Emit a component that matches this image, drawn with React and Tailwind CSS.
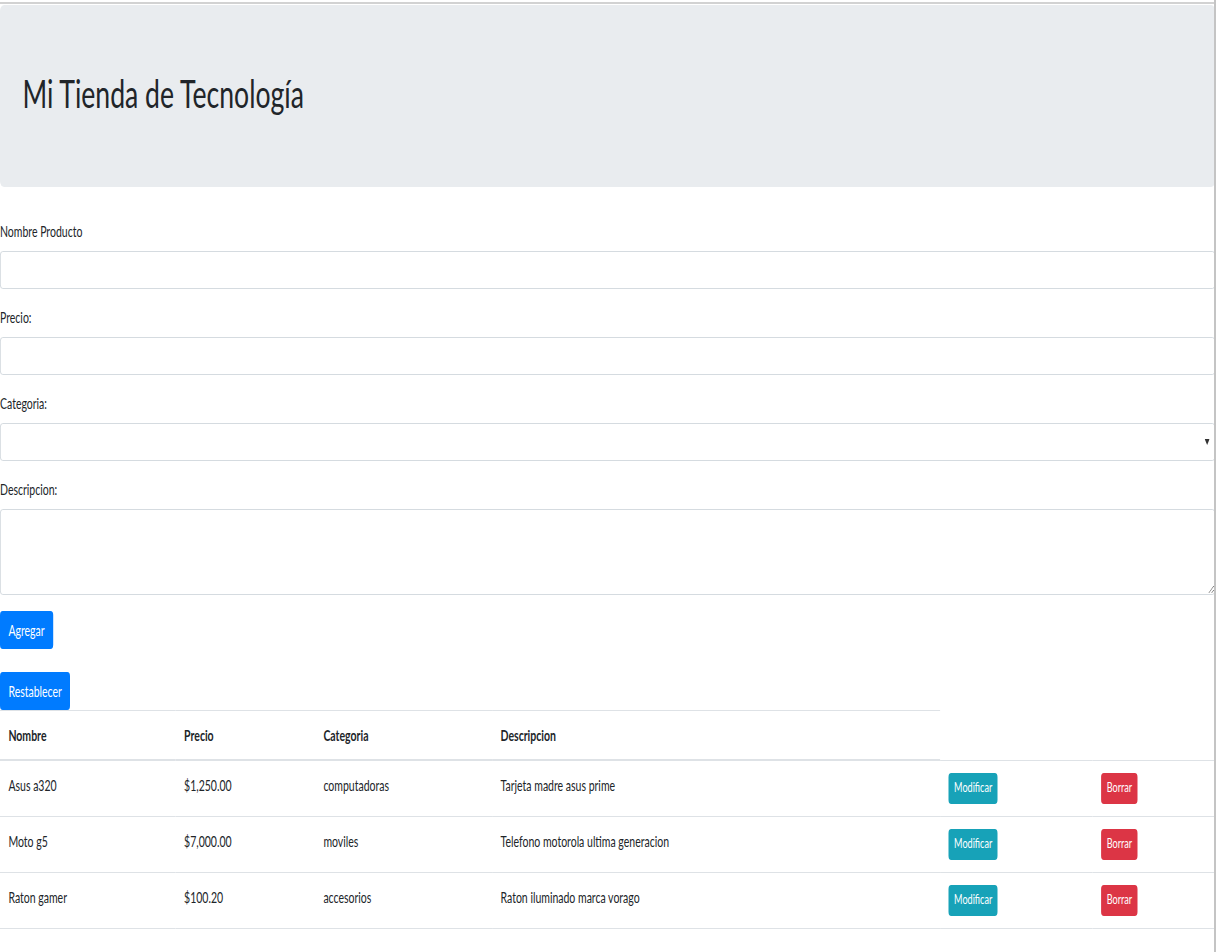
const productos = [
  { nombre: 'Asus a320', precio: '$1,250.00', categoria: 'computadoras', descripcion: 'Tarjeta madre asus prime' },
  { nombre: 'Moto g5', precio: '$7,000.00', categoria: 'moviles', descripcion: 'Telefono motorola ultima generacion' },
  { nombre: 'Raton gamer', precio: '$100.20', categoria: 'accesorios', descripcion: 'Raton iluminado marca vorago' },
]

function Field({ label, children }) {
  return (
    <div className="mb-4">
      <label className="mb-2 block">{label}</label>
      {children}
    </div>
  )
}

const inputClass = 'block h-[38px] w-full rounded border border-[#ced4da] bg-white px-3 outline-none'

// The reference is a wide desktop page captured and squeezed horizontally,
// so the page is laid out at its natural width and narrowed as a whole.
export default function App() {
  return (
    <div className="min-h-screen bg-white">
      <div className="min-h-screen w-[1216px] overflow-hidden border-r-2 border-[#c4c4c4] pt-[2px]">
        <div className="w-[1736px] origin-top-left scale-x-[0.7] border-t-2 border-[#d2d2d2] pt-px font-['Lato',sans-serif] text-[15px] leading-6 text-[#212529]">
          <div className="mb-8 rounded-md bg-[#e9ecef] px-8 py-16">
            <h1 className="mb-[6px] text-[38px] font-normal leading-[48px]">Mi Tienda de Tecnología</h1>
          </div>

          <form>
            <Field label="Nombre Producto">
              <input className={inputClass} type="text" />
            </Field>
            <Field label="Precio:">
              <input className={inputClass} type="text" />
            </Field>
            <Field label="Categoria:">
              <div className={inputClass + ' flex items-center justify-end pr-[7px]'}>
                <svg width="7" height="6" viewBox="0 0 7 6" aria-hidden="true">
                  <polygon points="0,0 7,0 3.5,6" fill="#333" />
                </svg>
              </div>
            </Field>
            <Field label="Descripcion:">
              <textarea className="block h-[86px] w-full rounded border border-[#ced4da] bg-white px-3 py-1.5 outline-none" />
            </Field>
            <button type="button" className="h-[38px] rounded bg-[#007bff] px-3 text-white">
              Agregar
            </button>
          </form>

          <button type="button" className="mt-[23px] h-[38px] rounded bg-[#007bff] px-3 text-white">
            Restablecer
          </button>

          <table className="w-full table-fixed border-collapse border-b border-[#dee2e6]">
            <colgroup>
              <col className="w-[251px]" />
              <col className="w-[199px]" />
              <col className="w-[253px]" />
              <col className="w-[640px]" />
              <col className="w-[218px]" />
              <col className="w-[175px]" />
            </colgroup>
            <thead>
              <tr>
                {['Nombre', 'Precio', 'Categoria', 'Descripcion'].map((h) => (
                  <th
                    key={h}
                    className="border-t border-b-2 border-[#dee2e6] p-3 text-left align-bottom font-bold"
                  >
                    {h}
                  </th>
                ))}
              </tr>
            </thead>
            <tbody>
              {productos.map((p) => (
                <tr key={p.nombre} className="border-t border-[#dee2e6]">
                  <td className="p-3 align-top">{p.nombre}</td>
                  <td className="p-3 align-top">{p.precio}</td>
                  <td className="p-3 align-top">{p.categoria}</td>
                  <td className="p-3 align-top">{p.descripcion}</td>
                  <td className="p-3 align-top">
                    <button type="button" className="h-[31px] rounded bg-[#17a2b8] px-2 text-[13px] leading-[1.5] text-white">
                      Modificar
                    </button>
                  </td>
                  <td className="p-3 align-top">
                    <button type="button" className="h-[31px] rounded bg-[#dc3545] px-2 text-[13px] leading-[1.5] text-white">
                      Borrar
                    </button>
                  </td>
                </tr>
              ))}
            </tbody>
          </table>
        </div>
      </div>
    </div>
  )
}
